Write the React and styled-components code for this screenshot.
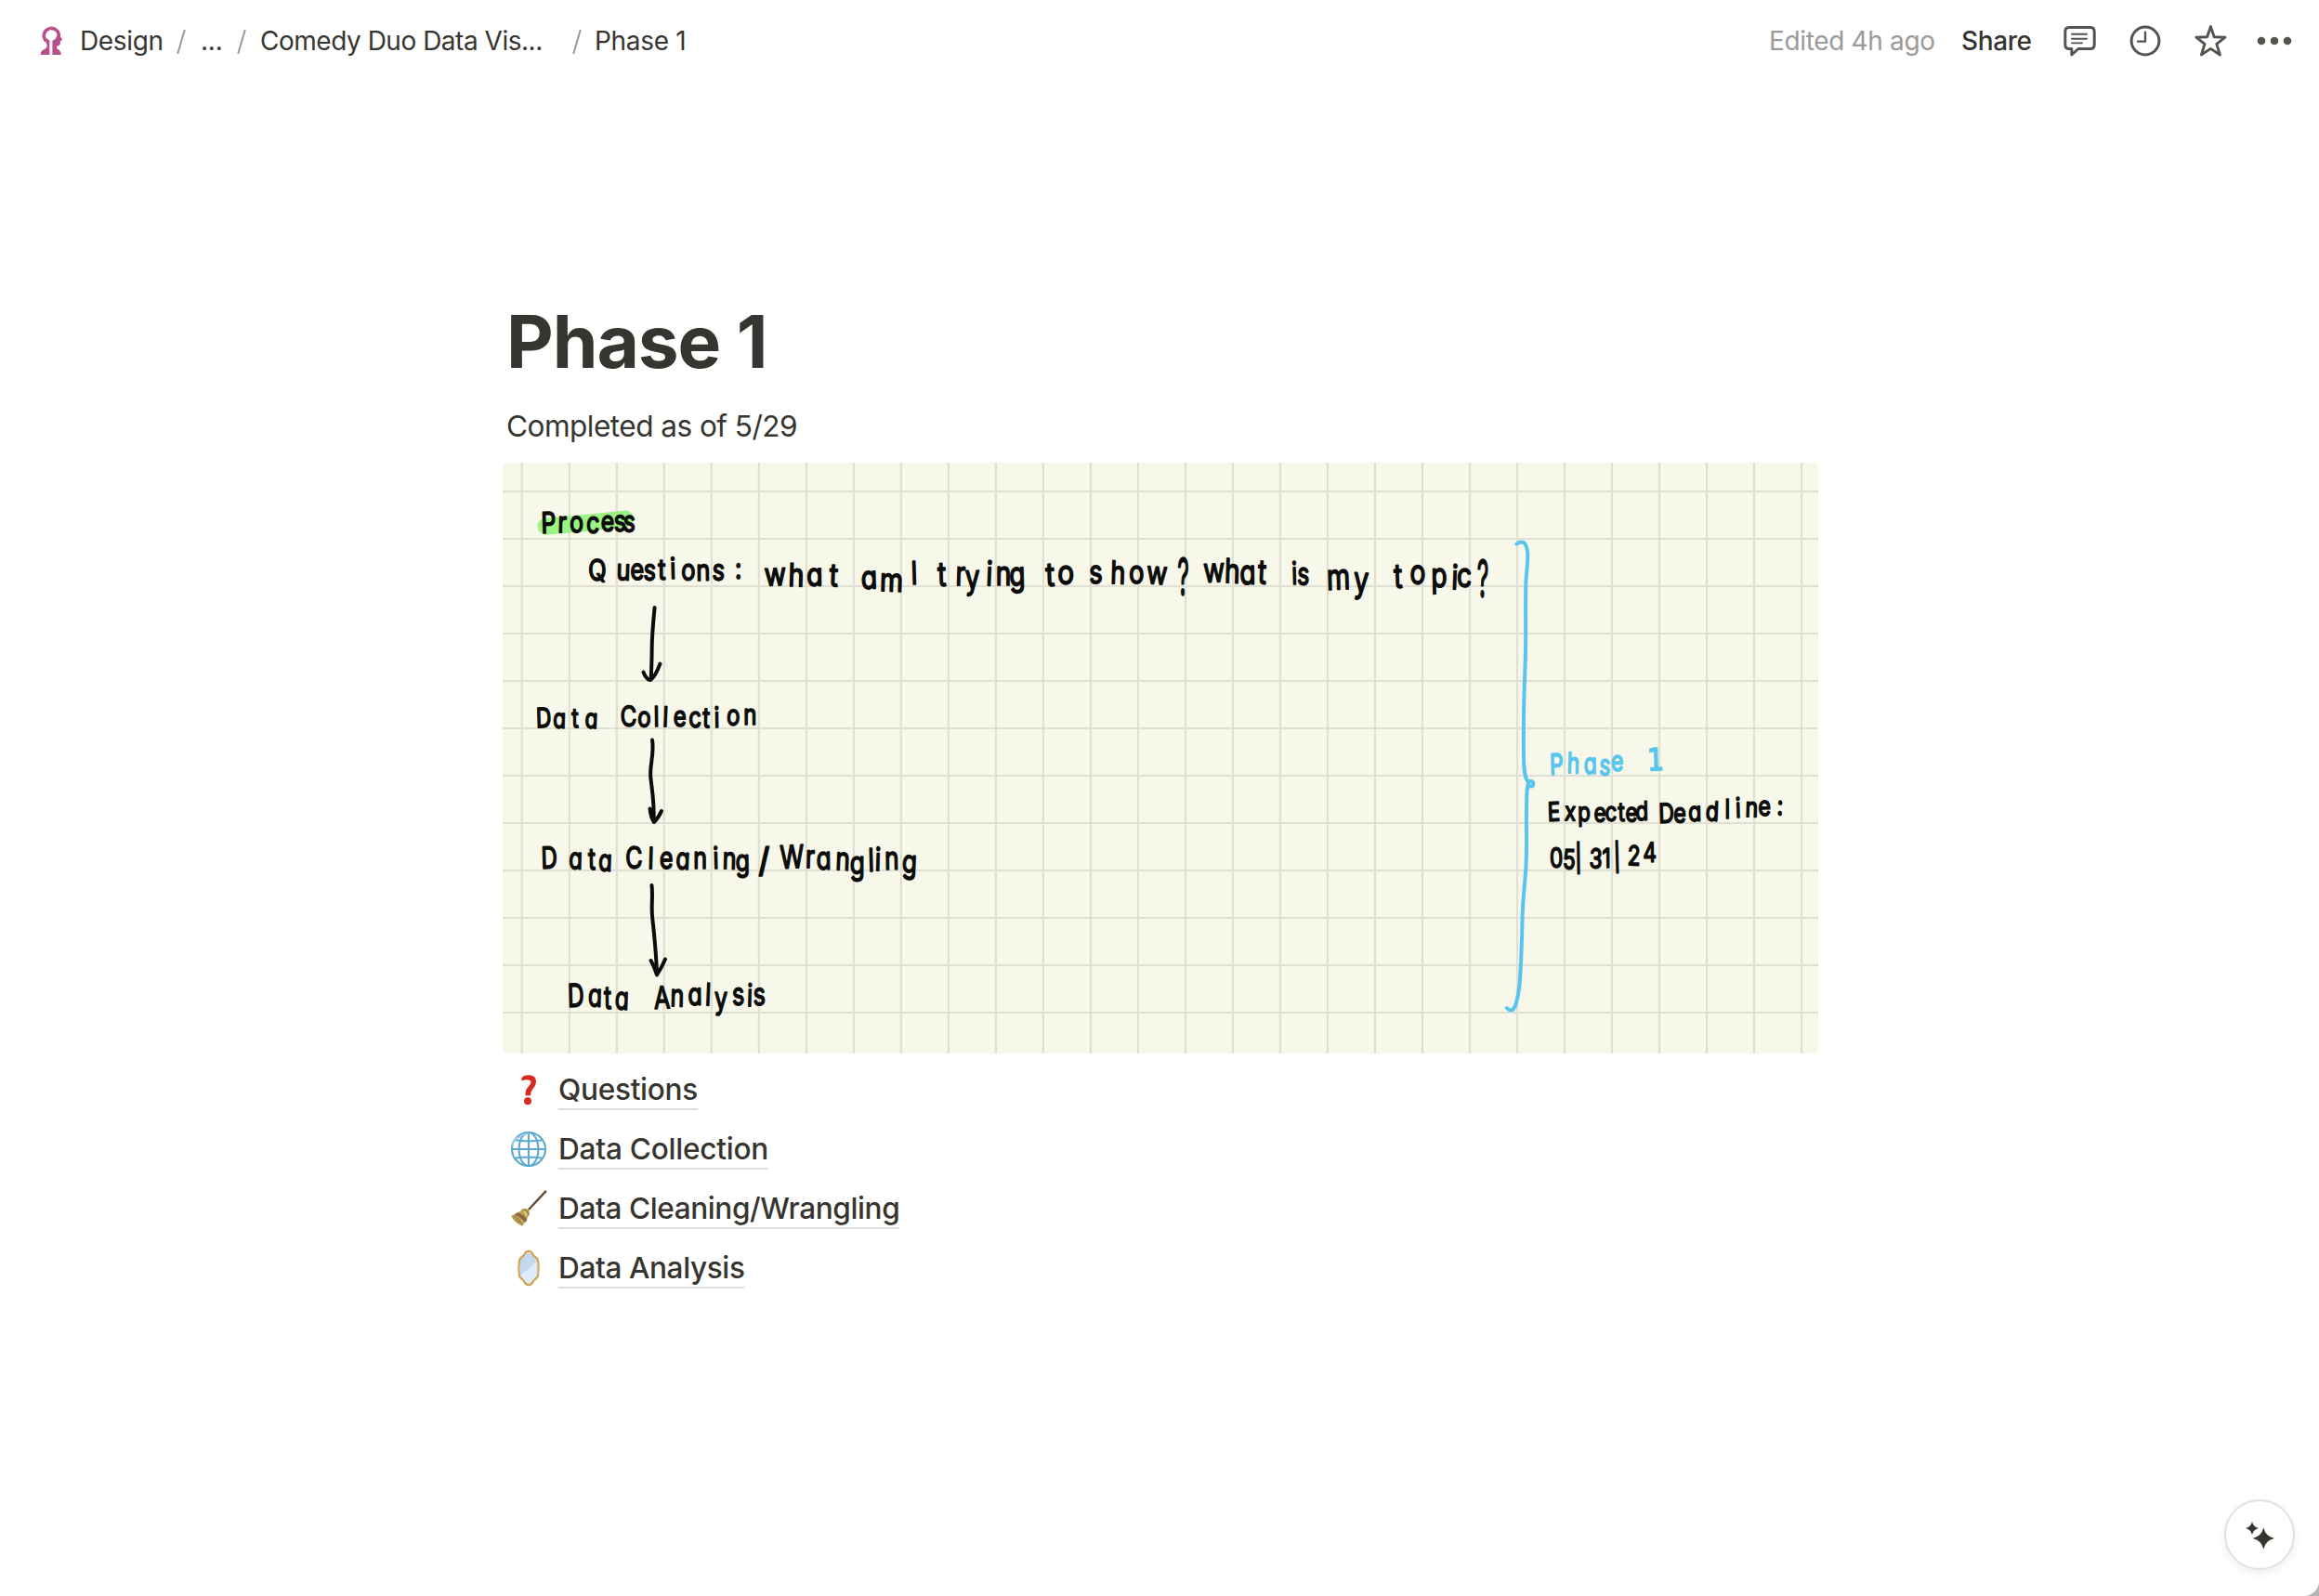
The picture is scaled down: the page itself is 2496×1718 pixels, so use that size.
import React from "react";
import styled, { createGlobalStyle } from "styled-components";

const GlobalStyle = createGlobalStyle`
  html, body { margin: 0; padding: 0; background: #b5b5b5; }
  * { box-sizing: border-box; }
`;

const Page = styled.div`
  display: flex;
  flex-direction: column;
  width: 2496px;
  height: 1718px;
  overflow: hidden;
  background: #fff;
  border-bottom-right-radius: 16px;
  color: #37352f;
  font-family: Inter, "Liberation Sans", sans-serif;
`;

const TopBar = styled.header`
  display: flex;
  align-items: center;
  justify-content: space-between;
  height: 88px;
  padding: 0 28px 0 43px;
  font-size: 28px;
  line-height: 40px;
  white-space: nowrap;
`;

const Crumbs = styled.nav`
  display: flex;
  align-items: center;
`;

const Crumb = styled.span`
  width: ${(p) => p.$width}px;
  letter-spacing: ${(p) => p.$track || 0}px;
`;

const Slash = styled.svg`
  width: 10px;
  height: 28px;
  margin: 2px ${(p) => p.$after}px 0 ${(p) => p.$before}px;
  flex: none;
`;

const Logo = styled.svg`
  width: 24px;
  height: 32px;
  margin-right: 19px;
`;

const Actions = styled.div`
  display: flex;
  align-items: center;
`;

const Edited = styled.span`
  width: 207px;
  color: #9b9a97;
  letter-spacing: -0.35px;
`;

const Share = styled.span`
  width: 109px;
  font-weight: 450;
  letter-spacing: -0.4px;
`;

const ActionIcon = styled.svg`
  width: ${(p) => p.$width}px;
  height: 36px;
  margin-right: ${(p) => p.$after || 0}px;
  fill: none;
  stroke: #55534e;
  stroke-width: 3;
  stroke-linejoin: round;
  stroke-linecap: round;
`;

const Content = styled.main`
  display: flex;
  flex-direction: column;
  width: 1416px;
  margin: 232px 0 0 541px;
`;

const Title = styled.h1`
  margin: 0 0 0 4px;
  height: 96px;
  font-size: 78.4px;
  line-height: 96px;
  font-weight: 700;
  letter-spacing: -1.1px;
`;

const Subtitle = styled.p`
  margin: 19px 0 0 4px;
  height: 48px;
  font-size: 31.6px;
  line-height: 48px;
  letter-spacing: -0.55px;
`;

const Sketch = styled.svg`
  display: block;
  width: 1416px;
  height: 636px;
  margin-top: 15px;
  border-radius: 4px;
  background: #f7f7ea;
`;

const Ink = styled.text`
  font-family: ${(p) => p.$family};
  font-feature-settings: "cv11" 1;
  font-weight: 400;
  text-anchor: middle;
  fill: ${(p) => p.$color};
  stroke: ${(p) => p.$color};
  stroke-width: 1.7;
  stroke-linejoin: round;
`;

const LinkList = styled.ul`
  list-style: none;
  margin: 7px 0 0;
  padding: 0;
`;

const LinkRow = styled.li`
  display: flex;
  align-items: center;
  height: 64px;
  padding-left: 8px;
`;

const Emoji = styled.svg`
  width: 40px;
  height: 40px;
  margin-right: 12px;
`;

const LinkText = styled.span`
  width: ${(p) => p.$width}px;
  height: 44px;
  padding-top: 1px;
  border-bottom: 2px solid #dededc;
  font-size: 31.6px;
  line-height: 41px;
  font-weight: 500;
  letter-spacing: ${(p) => p.$track}px;
  white-space: nowrap;
`;

const AssistantButton = styled.button`
  position: fixed;
  left: 2394px;
  top: 1614px;
  width: 76px;
  height: 76px;
  padding: 0;
  border: 2px solid #e1e1e0;
  border-radius: 50%;
  background: #fff;
  box-shadow: 0 4px 10px rgba(15, 15, 15, 0.07);
  display: grid;
  place-items: center;
`;

const BLACK = "#0c0c0a";
const SKY = "#58c5ef";

/* Each note: characters, horizontal centre of every character, baseline(s), size, width factor, colour. */
const notes = [
  ["Process", [590.7, 605, 620.7, 637.9, 653.9, 667.5, 677], [574, 573, 573, 573, 572, 572, 572], 31, 0.8],
  ["Questions:", [643.2, 670.7, 686, 699, 712.5, 724.6, 740.7, 757, 773, 794.6], [625, 624, 624, 624, 624, 623, 624, 625, 624, 623], 31, 0.82],
  ["what", [834.6, 856.8, 877, 896.8], 630.7, 34, 0.84],
  ["am", [935.7, 959.3], [634, 636], 34, 0.84],
  ["l", [984.3], 629, 34, 0.8],
  ["trying", [1014, 1033.6, 1046.8, 1064.5, 1080, 1095], [631, 630, 634, 630, 630, 631], 36, 0.78],
  ["to", [1130.6, 1147], [631, 628], 35, 0.85],
  ["show", [1179.6, 1203, 1223.3, 1245], 628, 34, 0.8],
  ["?", [1273.5], 641, 56, 0.44],
  ["what", [1307, 1326, 1343, 1358], [627, 627, 629, 628], 36, 0.78],
  ["is", [1393.5, 1402.6], 629, 33, 0.75],
  ["my", [1441, 1465], [635, 637], 38, 0.76],
  ["topic", [1505, 1525.7, 1549, 1565.3, 1576], [633, 628, 632, 634, 632], 36, 0.78],
  ["?", [1596], 643, 56, 0.44],
  ["Data", [585.3, 602, 619.3, 636.3], 783.3, 29, 0.78],
  ["Collection", [676.7, 693.3, 706.7, 716, 731.7, 748.3, 760, 771.7, 789, 807.3], [782, 782, 782, 782, 782, 783, 783, 783, 780, 780], 30, 0.8],
  ["Data", [591.3, 619.3, 637.3, 651], [935, 935, 936, 937], 32, 0.75],
  ["Cleaning", [682.7, 700.3, 717.3, 734.7, 753.7, 770.7, 785, 799.3], [935, 935, 935, 935, 935, 935, 935, 938], 32, 0.78],
  ["/", [822.7], 939, 36, 1],
  ["Wrangling", [852.7, 871.7, 886.7, 906.7, 922.7, 938, 944.7, 960, 978.5], [935, 934, 936, 936, 941, 938, 937, 936, 939], 34, 0.77],
  ["Data", [620, 640.3, 654.3, 669], [1084, 1083, 1086, 1086], 34, 0.72],
  ["Analysis", [713, 728.7, 748.3, 761.7, 776, 795, 806.7, 817.3], [1086, 1083, 1082, 1082, 1086, 1082, 1083, 1082], 33, 0.76],
  ["Phase", [1675.7, 1693.3, 1711.7, 1727, 1740.7], [834, 832, 833, 834, 830], 31, 0.74, SKY],
  ["1", [1782.3], 829.6, 33, 0.85, SKY, '"DejaVu Sans", sans-serif'],
  ["Expected", [1672.7, 1690, 1705, 1721.7, 1734, 1745.3, 1755.7, 1767.3], [884, 883, 884, 884, 884, 884, 884, 883], 28, 0.8],
  ["Deadline:", [1794, 1807.8, 1824.3, 1842.7, 1859.3, 1871, 1885, 1899.3, 1915.7], [886, 885, 884, 883, 881, 880, 879, 878, 877], 29, 0.8],
  ["05|31|24", [1675.3, 1688.7, 1699, 1717.3, 1729, 1740.7, 1758.3, 1775.7], [934, 935, 934, 934, 934, 933, 931, 928], 29, 0.78],
];

function Note({ chars, xs, y, size, squeeze, color = BLACK, family = "Inter, sans-serif" }) {
  return (
    <Ink
      $color={color}
      $family={family}
      fontSize={size}
      transform={`scale(${squeeze} 1)`}
      x={xs.map((v) => (v / squeeze).toFixed(2)).join(" ")}
      y={Array.isArray(y) ? y.join(" ") : y}
      rotate={xs.map((_, i) => (size > 50 ? 0 : [-2, 2, -1, 3, 0][i % 5])).join(" ")}
    >
      {chars}
    </Ink>
  );
}

const columns = Array.from({ length: 28 }, (_, i) => 561.8 + i * 51.01);
const rows = Array.from({ length: 12 }, (_, i) => 529 + i * 51);

function ProcessSketch() {
  return (
    <Sketch viewBox="541 498 1416 636">
      <g stroke="#dfdfd3" strokeWidth="2.2">
        {columns.map((x) => <line key={x} x1={x} x2={x} y1="498" y2="1134" />)}
        {rows.map((y) => <line key={y} x1="541" x2="1957" y1={y} y2={y} />)}
      </g>
      <path d="M587.5 566.5 Q625 564 673 558.5" stroke="#9af385" strokeWidth="18" strokeLinecap="round" fill="none" />
      <g fill="none" stroke={BLACK} strokeWidth="4" strokeLinecap="round" strokeLinejoin="round">
        <path d="M704.6 654 C703 670 701.6 684 701.6 700 C701.6 712 701 722 700.7 731 M692.5 723.5 Q695.5 731.5 700 732 Q705 729 710.5 714.5" />
        <path d="M702 796.5 C704.5 811 699 824 700.3 837 C702 852 704.5 865 703.5 884 M699.5 870.5 Q700.5 880 704 885 Q708 881 712 873" />
        <path d="M701.5 953 C703 966 700.5 977 702.3 989 C704.5 1009 706.5 1030 707 1049 M700.6 1034 Q704 1040 707 1049.5 Q712 1042 716 1032.5" />
      </g>
      <path
        d="M1632.5 585.5 C1638 581.5 1642 583 1643.8 592 C1645.8 602 1642.5 615 1642.3 630 C1641.6 660 1642.8 690 1641.6 715 C1640.6 742 1639.2 775 1640 815 C1640.2 829 1641 837 1645 842 C1647 839.5 1650.5 841 1650.3 844 C1650 847 1645.5 847.5 1645 843.5 C1642.5 850 1643.4 860 1643 872 C1642.6 892 1643.8 905 1642.6 930 C1641.6 950 1639 965 1638.6 988 C1638 1010 1637.5 1040 1635.3 1062 C1633 1078 1630 1094 1621.8 1085"
        fill="none" stroke={SKY} strokeWidth="4" strokeLinecap="round" strokeLinejoin="round"
      />
      {notes.map(([chars, xs, y, size, squeeze, color, family], i) => (
        <Note key={i} chars={chars} xs={xs} y={y} size={size} squeeze={squeeze} color={color} family={family} />
      ))}
    </Sketch>
  );
}

function QuestionMark() {
  return (
    <Emoji viewBox="0 0 40 40">
      <path d="M12.2 10.2 Q12 6.2 16 4.8 Q27.5 2.6 28 11 Q28 15.5 24.5 19 Q22.3 21.3 22 26.2 H16.6 Q16 20.5 19.8 16.6 Q23 13.4 22.2 10.8 Q20.5 7.8 12.2 10.2Z" fill="#d52b20" />
      <circle cx="19" cy="32.3" r="4" fill="#d52b20" />
    </Emoji>
  );
}

function Globe() {
  return (
    <Emoji viewBox="0 0 40 40">
      <g fill="none" stroke="#5da9cf" strokeWidth="2.1">
        <circle cx="20" cy="20" r="18" />
        <ellipse cx="20" cy="20" rx="10.4" ry="18" />
        <path d="M20 2V38M2 20H38M5 10.3Q20 12.6 35 10.3M5 29.7Q20 27.4 35 29.7" />
      </g>
      <path d="M8.5 8.5A16.5 16.5 0 0 1 20 3.2M2.5 16A18 18 0 0 1 8 7" stroke="#9fd6ee" strokeWidth="1.4" fill="none" />
    </Emoji>
  );
}

function Broom() {
  return (
    <Emoji viewBox="0 0 40 40">
      <path d="M38.2 1.6 L20.5 20.5" stroke="#6e4637" strokeWidth="2.4" strokeLinecap="round" />
      <path d="M13.2 20.8 Q16.5 19 20 20.8 Q22 23.5 20.2 27.2 Q17.5 33.8 13.4 38.8 Q5.5 36.5 1.2 27.8 Q8 25.4 13.2 20.8Z" fill="#bfa65c" />
      <path d="M8.2 24.2 Q15.5 27 18.4 32 L16.3 35 Q11.5 29 4.6 26.3Z" fill="#8f6540" />
      <path d="M13.2 20.8 Q18 20.5 20.2 27.2M5 27.3 Q10 31 13 37.5M3.2 28.6 L10 35.5" stroke="#86702f" strokeWidth="1" fill="none" />
      <path d="M14.8 22.8 Q17 23.8 17.8 27.5" stroke="#efdf9d" strokeWidth="1.2" fill="none" />
    </Emoji>
  );
}

function Mirror() {
  const frame = "M20 1.8 C23.4 1.8 24.2 4.3 25 6 C26 8.2 30.2 8.2 30.2 13 C30.8 17 30.8 23 30.2 27 C30.2 31.8 26 31.8 25 34 C24.2 35.7 23.4 38.2 20 38.2 C16.6 38.2 15.8 35.7 15 34 C14 31.8 9.8 31.8 9.8 27 C9.2 23 9.2 17 9.8 13 C9.8 8.2 14 8.2 15 6 C15.8 4.3 16.6 1.8 20 1.8Z";
  return (
    <Emoji viewBox="0 0 40 40">
      <path d={frame} fill="#dfeafa" />
      <path d="M10 12.5 Q13 7.5 20 3 Q25 6 29.5 12 L10.5 29Z" fill="#c5d8f0" />
      <path d={frame} fill="none" stroke="#c9913a" strokeWidth="2" />
      <path d={frame} fill="none" stroke="#f0cc73" strokeWidth="0.6" />
    </Emoji>
  );
}

const links = [
  { label: "Questions", width: 150, track: -0.3, icon: QuestionMark },
  { label: "Data Collection", width: 226, track: -0.25, icon: Globe },
  { label: "Data Cleaning/Wrangling", width: 367, track: -0.42, icon: Broom },
  { label: "Data Analysis", width: 200, track: -0.4, icon: Mirror },
];

function Divider({ before, after }) {
  return (
    <Slash viewBox="0 0 10 28" $before={before} $after={after}>
      <path d="M1.2 27 L8.8 1" stroke="#9b9a97" strokeWidth="2" />
    </Slash>
  );
}

export default function App() {
  return (
    <Page>
      <GlobalStyle />
      <TopBar>
        <Crumbs>
          <Logo viewBox="0 0 24 32">
            <path d="M6.4 16 A8.1 8.1 0 1 1 19.6 14" fill="none" stroke="#b8508d" strokeWidth="3.6" />
            <path d="M20.6 7.4 L21.6 11 L24 14.6 Q24 15.8 21.8 16.2 V19.6 Q21.5 21.6 18.3 21.4 V24.4 Q22.6 26 22.8 31 H13.4 V15.8 Q18 14 18.6 9Z" fill="#b8508d" />
            <path d="M4.2 14.6 L7.6 13.6 Q9 15 10.3 15.6 V31 H0.6 Q0.8 26.6 4.2 25.2 Q7.6 24 7.6 20.8 Q7.4 18.4 4.2 14.6Z" fill="#b8508d" />
          </Logo>
          <Crumb $width={88} $track={-0.35}>Design</Crumb>
          <Divider before={16} after={16} />
          <Crumb $width={24} $track={-0.2}>...</Crumb>
          <Divider before={15} after={15} />
          <Crumb $width={305} $track={-0.48}>Comedy Duo Data Vis...</Crumb>
          <Divider before={31} after={14} />
          <Crumb $width={100} $track={-0.3}>Phase 1</Crumb>
        </Crumbs>
        <Actions>
          <Edited>Edited 4h ago</Edited>
          <Share>Share</Share>
          <ActionIcon viewBox="0 0 36 36" $width={36} $after={35}>
            <path d="M7 3.5H30Q34.2 3.5 34.2 8V22Q34.2 26.5 30 26.5H17L9.8 33V26.5H7Q2.8 26.5 2.8 22V8Q2.8 3.5 7 3.5Z" />
            <path d="M10 10.8H26M10 15.8H26M10 20.4H21" strokeWidth="1.9" />
          </ActionIcon>
          <ActionIcon viewBox="0 0 36 36" $width={36} $after={34}>
            <circle cx="18" cy="18" r="14.9" />
            <path d="M18 8.6V18.6H10" strokeWidth="2.4" />
          </ActionIcon>
          <ActionIcon viewBox="0 0 36 36" $width={36} $after={31}>
            <path d="M18.4 2.6L22.2 13.8L34 14.2L24.8 21.4L28.4 33L18.4 26.4L8.4 33L12 21.4L2.8 14.2L14.6 13.8Z" strokeWidth="2.9" />
          </ActionIcon>
          <ActionIcon viewBox="0 0 40 36" $width={40}>
            <g fill="#55534e" stroke="none">
              <circle cx="6" cy="18" r="4.3" />
              <circle cx="20" cy="18" r="4.3" />
              <circle cx="34" cy="18" r="4.3" />
            </g>
          </ActionIcon>
        </Actions>
      </TopBar>
      <Content>
        <Title>Phase 1</Title>
        <Subtitle>Completed as of 5/29</Subtitle>
        <ProcessSketch />
        <LinkList>
          {links.map(({ label, width, track, icon: Icon }) => (
            <LinkRow key={label}>
              <Icon />
              <LinkText $width={width} $track={track}>{label}</LinkText>
            </LinkRow>
          ))}
        </LinkList>
      </Content>
      <AssistantButton aria-label="Ask AI">
        <svg width="40" height="40" viewBox="0 0 40 40" fill="#37352f">
          <path d="M24.3 12.3 Q26.4 21.9 36 24 Q26.4 26.1 24.3 35.7 Q22.2 26.1 12.6 24 Q22.2 21.9 24.3 12.3Z" />
          <path d="M12 6 Q13.3 11.7 19 13 Q13.3 14.3 12 20 Q10.7 14.3 5 13 Q10.7 11.7 12 6Z" />
        </svg>
      </AssistantButton>
    </Page>
  );
}
